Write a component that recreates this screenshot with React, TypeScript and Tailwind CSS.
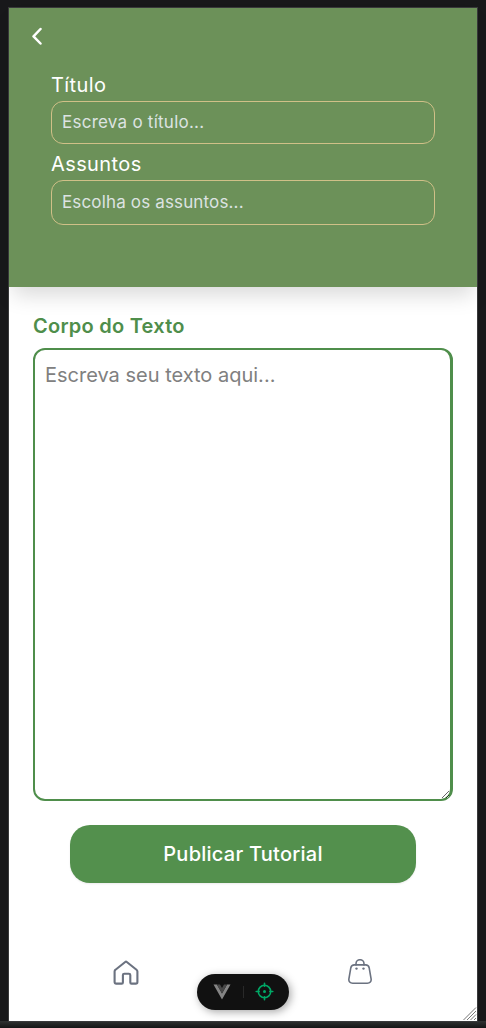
import React from "react";

function Field({ label, placeholder, boxClass, labelClass, inputClass }: { label: string; placeholder: string; boxClass: string; labelClass: string; inputClass: string }) {
  return (
    <label className="block">
      <span className={`block h-7 whitespace-nowrap text-[20px] leading-[26px] text-white ${labelClass}`}>{label}</span>
      <input
        type="text"
        placeholder={placeholder}
        className={`block w-full rounded-[12px] border border-[#d0c088] bg-transparent px-2.5 pb-[2px] text-[17px] text-white outline-none placeholder:text-[#dde3e2] ${boxClass} ${inputClass}`}
      />
    </label>
  );
}

function BackIcon() {
  return (
    <svg width="12" height="18" viewBox="0 0 12 18" fill="none" stroke="white" strokeWidth="2.5" strokeLinecap="round" strokeLinejoin="round">
      <path d="M9.500 2 2.500 9.300l7 7.200" />
    </svg>
  );
}

function HomeIcon() {
  return (
    <svg width="26" height="26" viewBox="0 0 26 26" fill="none" stroke="#6b7280" strokeWidth="2.1" strokeLinejoin="round">
      <path d="M2.500 9.700 12.200 2q.8-.6 1.600 0l9.700 7.700q.9.700.9 1.800V22q0 1.600-1.600 1.600h-4.300q-1.200 0-1.200-1.200v-7.300q0-1.400-1.400-1.400h-4.600q-1.400 0-1.400 1.400v7.300q0 1.200-1.200 1.200H3.200Q1.600 23.600 1.600 22V11.500q0-1.100.9-1.800Z" />
    </svg>
  );
}

function BagIcon() {
  return (
    <svg width="24" height="26" viewBox="0 0 24 26" fill="none" stroke="#6b7280" strokeWidth="1.600" strokeLinecap="round">
      <path d="M6.500 5.900h11c2 0 3.300 1 3.700 3l1.900 11c.4 2.600-1.200 4.300-3.800 4.300H4.700c-2.600 0-4.200-1.700-3.800-4.300l1.900-11c.4-2 1.700-3 3.700-3Z" />
      <path d="M8 5.900V4.700a4 4 0 0 1 8 0v1.200" />
      <circle cx="8.500" cy="9.600" r="1.200" fill="#6b7280" stroke="none" />
      <circle cx="15.500" cy="9.600" r="1.200" fill="#6b7280" stroke="none" />
    </svg>
  );
}

function DevToolbar() {
  return (
    <div className="absolute left-[188px] top-[966px] flex h-9 w-[92px] items-center rounded-full bg-[#111111] shadow-[2px_2px_8px_rgba(0,0,0,0.35)]">
      <svg className="ml-[16px]" width="18" height="16" viewBox="0 0 18 16">
        <path d="M.5.5h3.400L9 9.500 14.100.5h3.400L9 15.500Z" fill="#858585" />
        <path d="M3.900.5H7L9 4l2-3.500h3.100L9 9.500Z" fill="#484848" />
      </svg>
      <span className="ml-[12px] h-3 w-px bg-[#292929]" />
      <svg className="-mt-px ml-[11px]" width="19" height="19" viewBox="0 0 19 19" fill="none" stroke="#00a866" strokeWidth="1.600" strokeLinecap="round">
        <circle cx="9.500" cy="9.500" r="6.200" />
        <path d="M9.500 1.200v3M9.500 14.800v3M1.200 9.500h3M14.800 9.500h3" />
        <circle cx="9.500" cy="9.500" r="1.500" fill="#00a866" stroke="none" />
      </svg>
    </div>
  );
}

export default function App() {
  return (
    <div className="h-[1028px] w-[486px] overflow-hidden bg-[#18181a] bg-[linear-gradient(to_bottom,transparent_1021px,#303232_1021px,#151516_1028px)] pl-[9px] pt-[8px] font-['Inter','Liberation_Sans',sans-serif]">
      <main className="relative flex h-[1013px] w-[468px] flex-col bg-white shadow-[0_0_0_1px_#39393b]">
        <header className="h-[279px] shrink-0 bg-[#6c9159] shadow-[0_12px_20px_-4px_rgba(0,0,0,0.15)]">
          <button type="button" aria-label="Voltar" className="ml-[22px] mt-[19px] block h-[18px]">
            <BackIcon />
          </button>
          <div className="ml-[42px] mt-[27px] w-[384px]">
            <Field label="Título" placeholder="Escreva o título..." boxClass="h-[43px] mt-[1px]" labelClass="tracking-[0.4px]" inputClass="tracking-[0.25px]" />
            <div className="mt-[7px]">
              <Field label="Assuntos" placeholder="Escolha os assuntos..." boxClass="h-[45px] mt-[1px]" labelClass="tracking-[0.4px]" inputClass="tracking-[0.15px]" />
            </div>
          </div>
        </header>
        <section className="flex flex-col px-6 pt-6">
          <label htmlFor="body" className="h-[30px] text-[20px] font-semibold leading-[31px] tracking-[0.25px] text-[#4f8e4b]">Corpo do Texto</label>
          <textarea
            id="body"
            placeholder="Escreva seu texto aqui..."
            className="mt-[7px] h-[453px] w-[420px] resize rounded-[12px] border-2 border-r-[3px] border-[#4f8e4b] px-2.5 py-[11px] text-[20px] leading-7 outline-none placeholder:text-[#808080]"
          />
          <button type="button" className="ml-[37px] mt-6 h-[58px] w-[346px] rounded-[20px] bg-[#53904d] text-[20px] font-medium tracking-[0.25px] text-white shadow-[0_1px_2px_rgba(0,0,0,0.08)]">
            Publicar Tutorial
          </button>
        </section>
        <nav className="mt-[76px] flex justify-between pl-[104px] pr-[105px]">
          <a href="#home" aria-label="Início" className="pt-px"><HomeIcon /></a>
          <a href="#bag" aria-label="Sacola"><BagIcon /></a>
        </nav>
        <DevToolbar />
        <svg className="absolute bottom-0 right-0" width="15" height="15" viewBox="0 0 15 15" stroke="#777" strokeWidth="1">
          <path d="M1.500 14 14 1.500M5 14l9-9M8.500 14 14 8.500M12 14l2-2" />
        </svg>
      </main>
    </div>
  );
}
